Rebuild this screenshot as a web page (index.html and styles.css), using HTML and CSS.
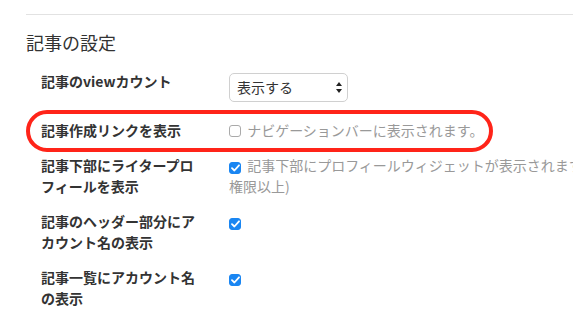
FILE: index.html
```html
<!DOCTYPE html>
<html lang="ja">
<head>
    <meta charset="UTF-8">
    <meta name="viewport" content="width=device-width, initial-scale=1.0">
    <title>記事の設定</title>
    <link rel="stylesheet" href="styles.css">
</head>
<body>
    <div class="container">
        <hr class="divider">
        <h2 class="section-title">記事の設定</h2>

        <div class="row row-select">
            <div class="label">記事のviewカウント</div>
            <div class="value">
                <div class="select">
                    <span>表示する</span>
                    <svg class="arrows" width="6" height="11" viewBox="0 0 6 11">
                        <path d="M3 0 L6 4 L0 4 Z" fill="#222"/>
                        <path d="M3 11 L6 7 L0 7 Z" fill="#222"/>
                    </svg>
                </div>
            </div>
        </div>

        <div class="row highlight">
            <div class="label">記事作成リンクを表示</div>
            <div class="value">
                <span class="checkbox"></span>
                <span class="help">ナビゲーションバーに表示されます。</span>
            </div>
        </div>

        <div class="row">
            <div class="label">記事下部にライタープロフィールを表示</div>
            <div class="value">
                <span class="checkbox checked"><svg width="9" height="8" viewBox="0 0 9 8"><path d="M1 4.2 L3.4 6.5 L8 1.3" stroke="#fff" stroke-width="1.8" fill="none" stroke-linecap="round" stroke-linejoin="round"/></svg></span>
                <span class="help">記事下部にプロフィールウィジェットが表示されます(ライター権限以上)</span>
            </div>
        </div>

        <div class="row">
            <div class="label">記事のヘッダー部分にアカウント名の表示</div>
            <div class="value">
                <span class="checkbox checked"><svg width="9" height="8" viewBox="0 0 9 8"><path d="M1 4.2 L3.4 6.5 L8 1.3" stroke="#fff" stroke-width="1.8" fill="none" stroke-linecap="round" stroke-linejoin="round"/></svg></span>
            </div>
        </div>

        <div class="row">
            <div class="label">記事一覧にアカウント名の表示</div>
            <div class="value">
                <span class="checkbox checked"><svg width="9" height="8" viewBox="0 0 9 8"><path d="M1 4.2 L3.4 6.5 L8 1.3" stroke="#fff" stroke-width="1.8" fill="none" stroke-linecap="round" stroke-linejoin="round"/></svg></span>
            </div>
        </div>
    </div>
</body>
</html>
```

FILE: styles.css
```css
body {
    font-family: "Noto Sans CJK JP", "Noto Sans", sans-serif;
    background-color: #fff;
    color: #333;
    margin: 0;
    padding: 0;
    overflow: hidden;
}

.container {
    padding: 14px 0 0 26px;
    width: 700px;
}

.divider {
    border: none;
    border-top: 1px solid #e2e2e2;
    margin: 0;
}

.section-title {
    font-size: 18px;
    font-weight: normal;
    line-height: 27px;
    margin: 14px 0 15px 0;
}

/* 設定の行 */
.row {
    display: flex;
    align-items: flex-start;
    padding-left: 15px;
    margin-bottom: 14px;
    position: relative;
}

.label {
    width: 160px;
    flex-shrink: 0;
    margin-right: 28px;
    font-size: 14px;
    font-weight: bold;
    line-height: 21px;
    color: #333;
}

.value {
    width: 416px;
    flex-shrink: 0;
    font-size: 14px;
    line-height: 21px;
}

.select {
    display: flex;
    align-items: center;
    justify-content: space-between;
    box-sizing: border-box;
    width: 119px;
    height: 29px;
    margin: 2px 0 4px 0;
    padding: 0 5px 0 7px;
    border: 1px solid #d0d0d0;
    border-radius: 5px;
    font-size: 14px;
    color: #333;
}

.checkbox {
    display: inline-flex;
    align-items: center;
    justify-content: center;
    box-sizing: border-box;
    width: 12px;
    height: 12px;
    border: 1px solid #aaa;
    border-radius: 3px;
    vertical-align: -1px;
    margin-right: 3px;
}

.checkbox.checked {
    background-color: #1a86f2;
    border-color: #1a86f2;
}

.help {
    color: #999;
}

/* 赤枠の強調 */
.highlight::before {
    content: "";
    position: absolute;
    left: 0;
    top: -10px;
    width: 459px;
    height: 34px;
    border: 4px solid #ff2419;
    border-radius: 21px;
}
```
